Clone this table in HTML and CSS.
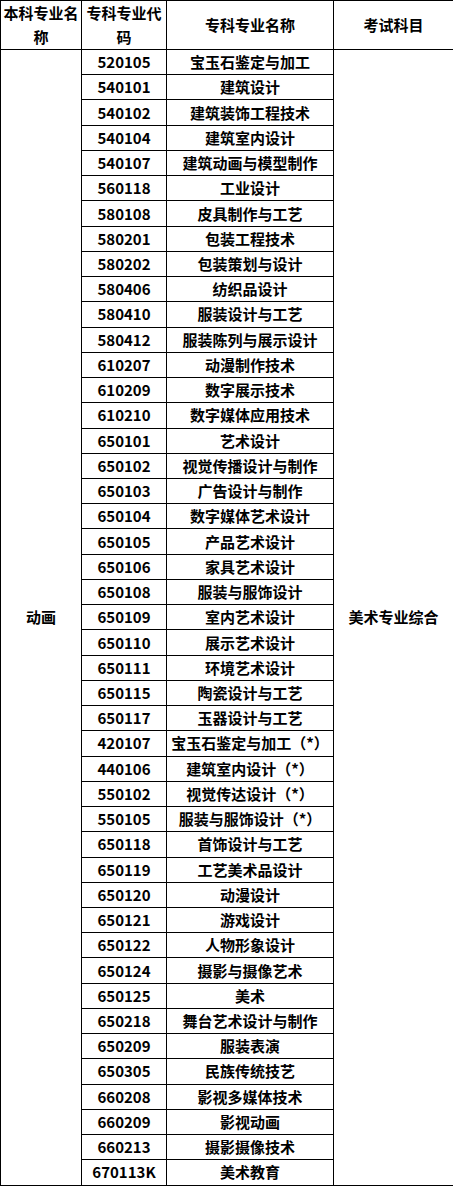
FILE: index.html
```html
<!DOCTYPE html>
<html lang="zh-CN">
<head>
<meta charset="utf-8">
<title>专业对照表</title>
<link rel="stylesheet" href="styles.css">
</head>
<body>
<table class="majors">
<colgroup>
<col class="c1"><col class="c2"><col class="c3"><col class="c4">
</colgroup>
<thead>
<tr class="head">
<th>本科专业名称</th>
<th>专科专业代码</th>
<th>专科专业名称</th>
<th>考试科目</th>
</tr>
</thead>
<tbody>
<tr><td rowspan="45">动画</td><td>520105</td><td>宝玉石鉴定与加工</td><td rowspan="45">美术专业综合</td></tr>
<tr><td>540101</td><td>建筑设计</td></tr>
<tr><td>540102</td><td>建筑装饰工程技术</td></tr>
<tr><td>540104</td><td>建筑室内设计</td></tr>
<tr><td>540107</td><td>建筑动画与模型制作</td></tr>
<tr><td>560118</td><td>工业设计</td></tr>
<tr><td>580108</td><td>皮具制作与工艺</td></tr>
<tr><td>580201</td><td>包装工程技术</td></tr>
<tr><td>580202</td><td>包装策划与设计</td></tr>
<tr><td>580406</td><td>纺织品设计</td></tr>
<tr><td>580410</td><td>服装设计与工艺</td></tr>
<tr><td>580412</td><td>服装陈列与展示设计</td></tr>
<tr><td>610207</td><td>动漫制作技术</td></tr>
<tr><td>610209</td><td>数字展示技术</td></tr>
<tr><td>610210</td><td>数字媒体应用技术</td></tr>
<tr><td>650101</td><td>艺术设计</td></tr>
<tr><td>650102</td><td>视觉传播设计与制作</td></tr>
<tr><td>650103</td><td>广告设计与制作</td></tr>
<tr><td>650104</td><td>数字媒体艺术设计</td></tr>
<tr><td>650105</td><td>产品艺术设计</td></tr>
<tr><td>650106</td><td>家具艺术设计</td></tr>
<tr><td>650108</td><td>服装与服饰设计</td></tr>
<tr><td>650109</td><td>室内艺术设计</td></tr>
<tr><td>650110</td><td>展示艺术设计</td></tr>
<tr><td>650111</td><td>环境艺术设计</td></tr>
<tr><td>650115</td><td>陶瓷设计与工艺</td></tr>
<tr><td>650117</td><td>玉器设计与工艺</td></tr>
<tr><td>420107</td><td>宝玉石鉴定与加工（*）</td></tr>
<tr><td>440106</td><td>建筑室内设计（*）</td></tr>
<tr><td>550102</td><td>视觉传达设计（*）</td></tr>
<tr><td>550105</td><td>服装与服饰设计（*）</td></tr>
<tr><td>650118</td><td>首饰设计与工艺</td></tr>
<tr><td>650119</td><td>工艺美术品设计</td></tr>
<tr><td>650120</td><td>动漫设计</td></tr>
<tr><td>650121</td><td>游戏设计</td></tr>
<tr><td>650122</td><td>人物形象设计</td></tr>
<tr><td>650124</td><td>摄影与摄像艺术</td></tr>
<tr><td>650125</td><td>美术</td></tr>
<tr><td>650218</td><td>舞台艺术设计与制作</td></tr>
<tr><td>650209</td><td>服装表演</td></tr>
<tr><td>650305</td><td>民族传统技艺</td></tr>
<tr><td>660208</td><td>影视多媒体技术</td></tr>
<tr><td>660209</td><td>影视动画</td></tr>
<tr><td>660213</td><td>摄影摄像技术</td></tr>
<tr><td>670113K</td><td>美术教育</td></tr>
</tbody>
</table>
</body>
</html>
```

FILE: styles.css
```css
html, body {
  margin: 0;
  padding: 0;
  background: #fff;
}

.majors {
  border-collapse: collapse;
  table-layout: fixed;
  width: 453px;
  font-family: "Noto Sans CJK SC", "Noto Sans", sans-serif;
  font-size: 15px;
  font-weight: 700;
  color: #000;
}

.c1 { width: 81px; }
.c2 { width: 85px; }
.c3 { width: 167px; }
.c4 { width: 120px; }

.majors th,
.majors td {
  border: 1px solid #000;
  padding: 0 2px;
  text-align: center;
  vertical-align: middle;
  line-height: 22px;
  font-weight: 700;
}

.head th {
  height: 48px;
  line-height: 24px;
  padding: 0 1px;
}

.majors tbody tr {
  height: 25.24px;
}
```
